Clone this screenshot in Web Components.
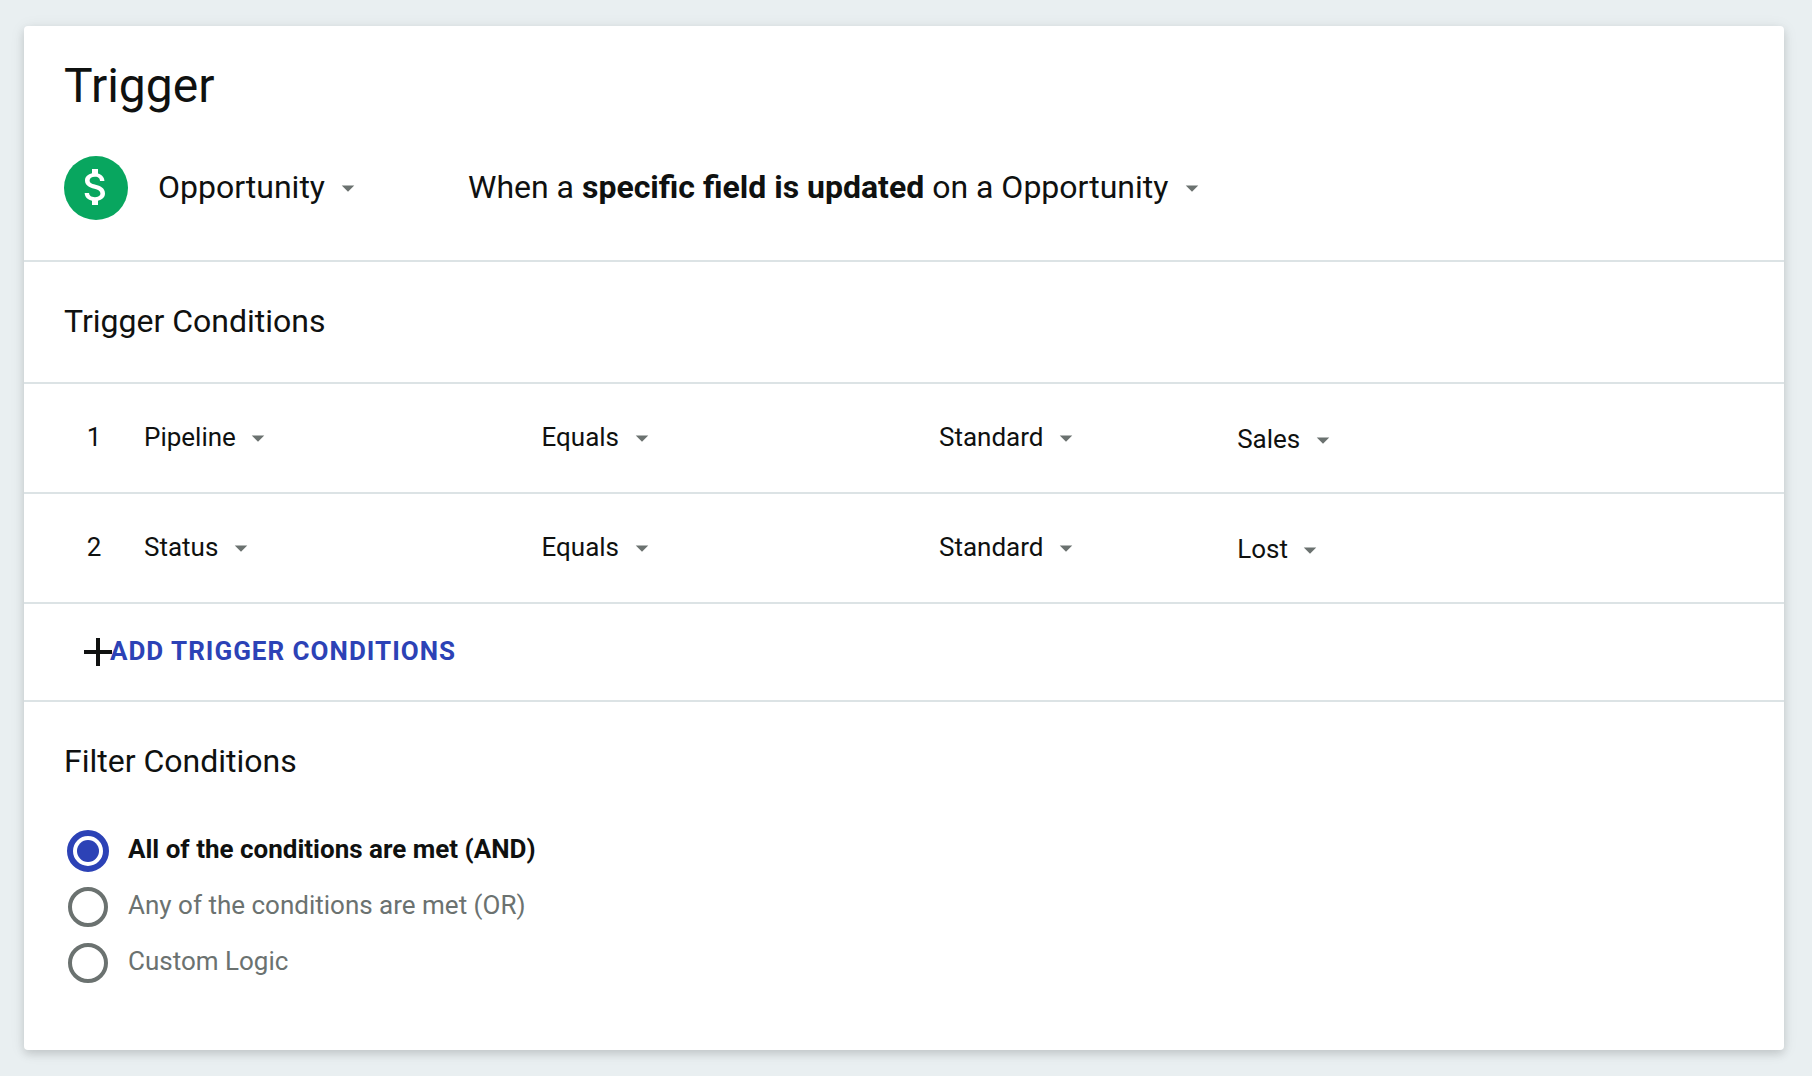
<!DOCTYPE html>
<html lang="en">
<head>
<meta charset="utf-8">
<meta name="viewport" content="width=device-width, initial-scale=1">
<title>Trigger</title>
<style>
  body {
    --ink: #0f1110;
    --muted: #6b7270;
    --line: #dce3e5;
    --accent: #2c42b6;
    --gutter: 40px;
    margin: 0;
    padding: 26px 28px 26px 24px;
    background: #e9eff1;
    color: var(--ink);
    font: 26px/32px Roboto, sans-serif;
  }
</style>
</head>
<body>
<trigger-card>
  <card-header heading="Trigger">
    <money-badge slot="icon"></money-badge>
    <drop-down slot="record" label="Record type" value="Opportunity"></drop-down>
    <rich-menu slot="event">When a <b>specific field is updated</b> on a Opportunity</rich-menu>
  </card-header>
  <section-title>Trigger Conditions</section-title>
  <condition-row number="1" field="Pipeline" operator="Equals" source="Standard" value="Sales"></condition-row>
  <condition-row number="2" field="Status" operator="Equals" source="Standard" value="Lost"></condition-row>
  <add-action>Add Trigger Conditions</add-action>
  <section-title plain>Filter Conditions</section-title>
  <filter-mode></filter-mode>
</trigger-card>

<script>
const CARET = `<svg class="caret" viewBox="0 0 24 24" aria-hidden="true"><path d="M7 10l5 5 5-5z"/></svg>`;

function define(name, render) {
  customElements.define(name, class extends HTMLElement {
    constructor() { super(); this.attachShadow({ mode: 'open' }); }
    connectedCallback() { this.shadowRoot.innerHTML = render(this); }
  });
}

define('trigger-card', () => `
  <style>
    :host { display: block; }
    main {
      padding-bottom: 58px; background: #fff; border-radius: 4px;
      box-shadow: 0 4px 8px rgba(0,0,0,.12), 0 2px 16px rgba(0,0,0,.08);
    }
  </style>
  <main><slot></slot></main>`);

define('card-header', el => `
  <style>
    :host { display: block; padding: 32px var(--gutter) 40px; border-bottom: 2px solid var(--line); }
    h1 { margin: 0 0 42px; font-size: 48px; line-height: 56px; font-weight: 400; }
    .line { --caret-room: 38px; display: flex; align-items: center; font-size: 32px; line-height: 40px; }
    .record { flex: 0 0 310px; margin-left: 30px; }
  </style>
  <h1>${el.getAttribute('heading')}</h1>
  <div class="line">
    <slot name="icon"></slot>
    <div class="record"><slot name="record"></slot></div>
    <slot name="event"></slot>
  </div>`);

define('money-badge', () => `
  <style>
    :host { display: grid; place-items: center; width: 64px; height: 64px; border-radius: 50%; background: #08a65f; }
    svg { width: 48px; height: 48px; fill: #fff; }
  </style>
  <svg viewBox="0 .5 24 24" aria-hidden="true"><path d="M11.8 10.9c-2.27-.59-3-1.2-3-2.15 0-1.09 1.01-1.85 2.7-1.85 1.78 0 2.44.85 2.5 2.1h2.21c-.07-1.72-1.12-3.3-3.21-3.81V3h-3v2.16c-1.94.42-3.5 1.68-3.5 3.61 0 2.31 1.91 3.46 4.7 4.13 2.5.6 3 1.48 3 2.41 0 .69-.49 1.79-2.7 1.79-2.06 0-2.87-.92-2.98-2.1h-2.2c.12 2.19 1.76 3.42 3.68 3.83V21h3v-2.15c1.95-.37 3.5-1.5 3.5-3.55 0-2.84-2.43-3.81-4.7-4.4z"/></svg>`);

define('drop-down', el => `
  <style>
    :host { display: block; }
    label { display: inline-grid; align-items: center; vertical-align: top; }
    select, .caret { grid-area: 1 / 1; }
    select {
      appearance: none; margin: 0; padding: 0 var(--caret-room, 37px) 2px 0; border: 0; border-radius: 0;
      background: none; color: inherit; font: inherit; cursor: pointer;
    }
    .caret { justify-self: end; width: 30px; height: 30px; fill: var(--muted); pointer-events: none; }
  </style>
  <label>
    <select aria-label="${el.getAttribute('label')}"><option>${el.getAttribute('value')}</option></select>
    ${CARET}
  </label>`);

define('rich-menu', () => `
  <style>
    :host { display: block; }
    button {
      display: flex; align-items: center; gap: 9px; margin: 0; padding: 0; border: 0;
      background: none; color: inherit; font: inherit; text-align: left; cursor: pointer;
    }
    span { padding-bottom: 2px; }
    .caret { flex: none; width: 30px; height: 30px; fill: var(--muted); }
  </style>
  <button type="button" aria-haspopup="listbox"><span><slot></slot></span>${CARET}</button>`);

define('section-title', () => `
  <style>
    :host { display: block; padding: 40px var(--gutter) 42px; border-bottom: 2px solid var(--line); }
    :host([plain]) { border-color: transparent; }
    h2 { margin: 0; font-size: 32px; line-height: 38px; font-weight: 400; }
  </style>
  <h2><slot></slot></h2>`);

define('condition-row', el => {
  const v = n => el.getAttribute(n);
  return `
  <style>
    :host {
      display: grid; grid-template-columns: 80px 4fr 4fr 3fr 5fr; align-items: center;
      padding: 35px 50px 35px var(--gutter); border-bottom: 2px solid var(--line); line-height: 36px;
    }
    .number { padding: 0 20px 2px 0; text-align: center; }
    .value { margin: 4px 0 0; line-height: 32px; }
  </style>
  <span class="number">${v('number')}</span>
  <drop-down label="Field" value="${v('field')}"></drop-down>
  <drop-down label="Operator" value="${v('operator')}"></drop-down>
  <drop-down label="Source" value="${v('source')}"></drop-down>
  <drop-down class="value" label="Value" value="${v('value')}"></drop-down>`;
});

define('add-action', () => `
  <style>
    :host { display: block; padding: 32px 60px; border-bottom: 2px solid var(--line); }
    button {
      display: flex; align-items: center; margin: 0; padding: 0; border: 0; background: none; cursor: pointer;
      color: var(--accent); font: inherit; line-height: 30px; font-weight: 700; letter-spacing: 1px; text-transform: uppercase;
    }
    svg { width: 28px; height: 28px; margin-right: -2px; fill: var(--ink); }
    span { padding-bottom: 2px; }
  </style>
  <button type="button">
    <svg viewBox="0 0 28 28" aria-hidden="true"><path d="M12 0h4v12h12v4H16v12h-4V16H0v-4h12z"/></svg>
    <span><slot></slot></span>
  </button>`);

define('filter-mode', () => `
  <style>
    :host { display: block; padding: 0 var(--gutter); }
    fieldset { margin: 0; padding: 0; border: 0; }
    label { display: flex; align-items: center; gap: 16px; width: max-content; padding: 6px 0 8px; color: var(--muted); cursor: pointer; }
    .box { display: grid; place-items: center; width: 48px; height: 42px; }
    input {
      appearance: none; box-sizing: border-box; width: 40px; height: 40px; margin: 0;
      border: 4px solid var(--muted); border-radius: 50%;
    }
    input:checked { width: 42px; height: 42px; padding: 4px; border: 6px solid var(--accent); background: var(--accent) content-box; }
    .text { padding-bottom: 4px; }
    label:has(:checked) { color: var(--ink); font-weight: 700; }
  </style>
  <fieldset aria-label="Filter Conditions">
    <label><span class="box"><input type="radio" name="mode" checked></span><span class="text">All of the conditions are met (AND)</span></label>
    <label><span class="box"><input type="radio" name="mode"></span><span class="text">Any of the conditions are met (OR)</span></label>
    <label><span class="box"><input type="radio" name="mode"></span><span class="text">Custom Logic</span></label>
  </fieldset>`);
</script>
</body>
</html>
